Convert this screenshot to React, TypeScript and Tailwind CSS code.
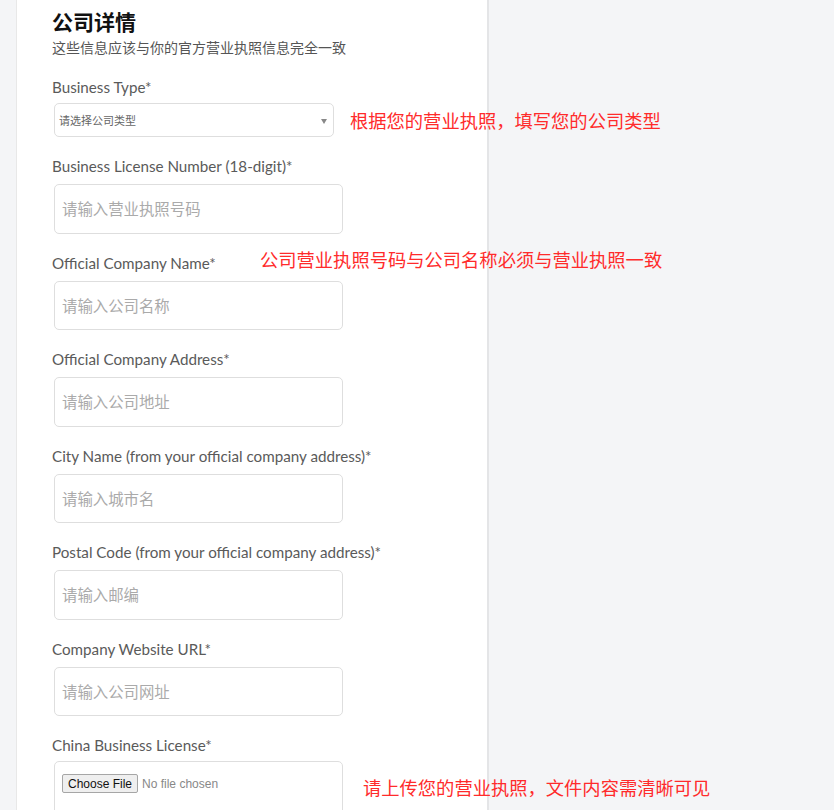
import React from 'react';

const fields = [
  { label: 'Business License Number (18-digit)*', placeholder: '请输入营业执照号码' },
  { label: 'Official Company Name*', placeholder: '请输入公司名称' },
  { label: 'Official Company Address*', placeholder: '请输入公司地址' },
  { label: 'City Name (from your official company address)*', placeholder: '请输入城市名' },
  { label: 'Postal Code (from your official company address)*', placeholder: '请输入邮编' },
  { label: 'Company Website URL*', placeholder: '请输入公司网址' },
];

const cjk = "font-['Lato','Noto_Sans_CJK_SC',sans-serif]";
const red = "absolute whitespace-nowrap text-[18.3px] leading-[24px] text-[#ff2b2b] font-['Noto_Sans_CJK_SC',sans-serif]";

export default function App() {
  return (
    <div className="min-h-screen bg-[#f4f5f7] flex">
      <div className="w-4 shrink-0" />
      <div className={`relative w-[473px] shrink-0 bg-white border-l border-[#e8e8e8] border-r-2 border-r-[#e4e5e7] pl-[35px] pt-[7px] pb-10 ${cjk}`}>
        {/* Header */}
        <h1 className="text-[21px] leading-[28px] font-bold text-[#111] font-['Noto_Sans_CJK_SC',sans-serif]">公司详情</h1>
        <p className="text-[14px] leading-[20px] text-[#555] mt-[2px] font-['Noto_Sans_CJK_SC',sans-serif]">
          这些信息应该与你的官方营业执照信息完全一致
        </p>

        {/* Business type */}
        <div className="mt-[20px]">
          <label className="block text-[15.2px] leading-[20px] text-[#5a5a5a]">Business Type*</label>
          <div className="relative mt-[6px] ml-[2px] w-[280px] h-[34px] border border-[#dedede] rounded-[5px] flex items-center px-[4px]">
            <span className="text-[11px] text-[#666] font-['Noto_Sans_CJK_SC',sans-serif]">请选择公司类型</span>
            <svg className="absolute right-[6px] top-[15px]" width="6" height="5" viewBox="0 0 6 5">
              <path d="M0 0h6L3 5z" fill="#888" />
            </svg>
          </div>
        </div>

        {fields.map((f) => (
          <div key={f.label} className="mt-[19px]">
            <label className="block text-[15.2px] leading-[20px] text-[#5a5a5a]">{f.label}</label>
            <div className="mt-[8px] ml-[2px] w-[289px] h-[49.5px] border border-[#dedede] rounded-[5px] flex items-center px-[7px]">
              <span className="text-[15.4px] text-[#aaa] font-['Noto_Sans_CJK_SC',sans-serif]">{f.placeholder}</span>
            </div>
          </div>
        ))}

        {/* License upload */}
        <div className="mt-[19px]">
          <label className="block text-[15.2px] leading-[20px] text-[#5a5a5a]">China Business License*</label>
          <div className="mt-[6px] ml-[2px] w-[289px] h-[110px] border border-[#dedede] rounded-[5px] pl-[7px] pt-[12px]">
            <div className="flex items-center gap-[4px] font-['Liberation_Sans',sans-serif] text-[12px]">
              <span className="h-[19px] px-[5px] flex items-center border border-[#a6a6a6] rounded-[2px] bg-[#efefef] text-[#111]">Choose File</span>
              <span className="text-[#888]">No file chosen</span>
            </div>
          </div>
        </div>

        {/* Annotations */}
        <div className={`${red} left-[333px] top-[108px]`}>根据您的营业执照，填写您的公司类型</div>
        <div className={`${red} left-[243px] top-[247px]`}>公司营业执照号码与公司名称必须与营业执照一致</div>
        <div className={`${red} left-[346px] top-[775px]`}>请上传您的营业执照，文件内容需清晰可见</div>
      </div>
      <div className="flex-1" />
    </div>
  );
}
